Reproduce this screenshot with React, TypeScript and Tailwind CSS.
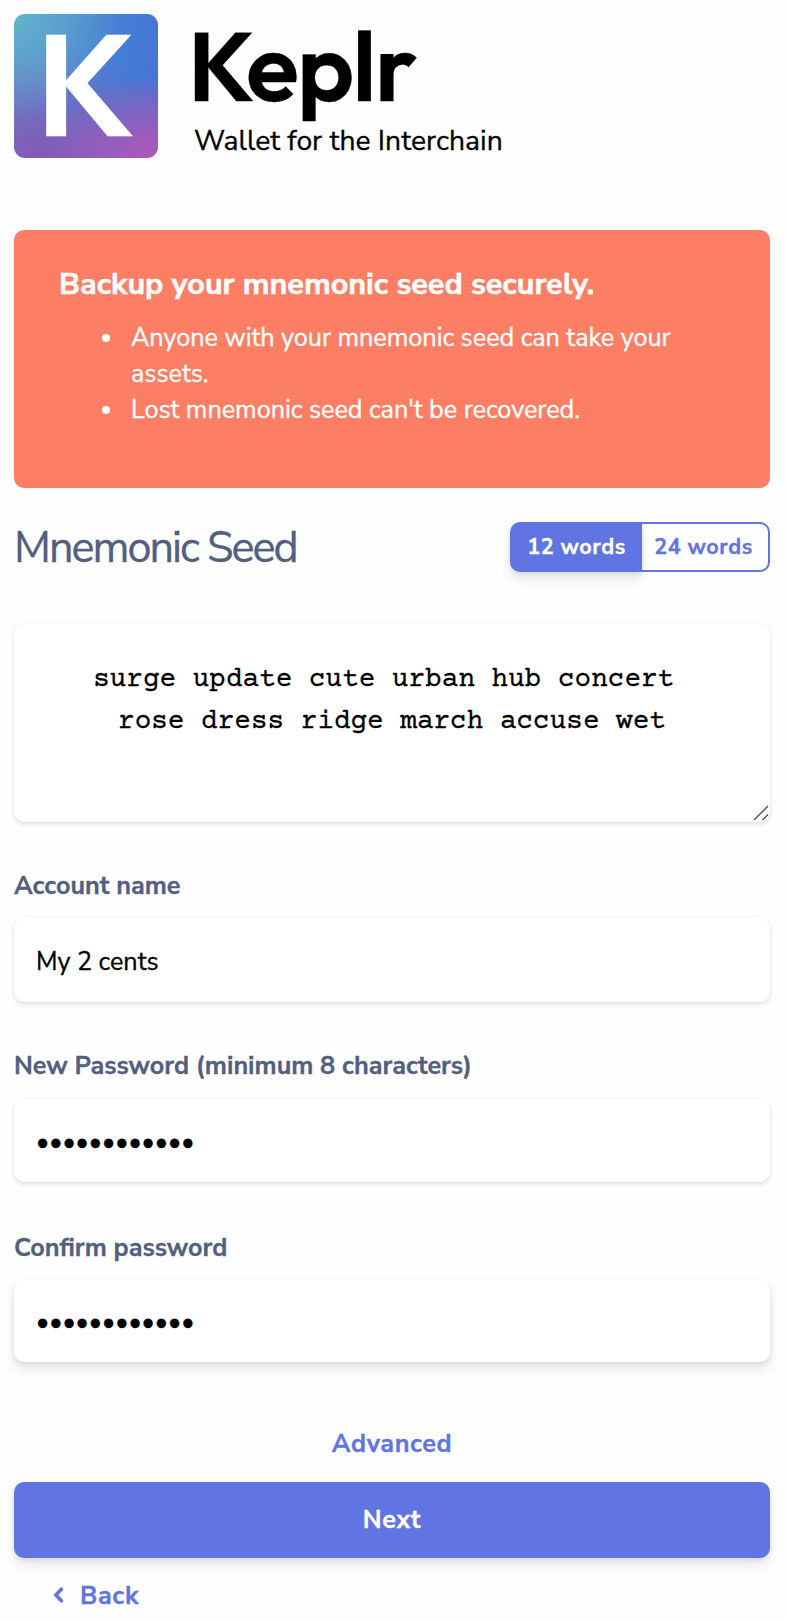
import React from "react";

const mnemonic = "surge update cute urban hub concert\u00a0\nrose dress ridge march accuse wet";

const inputBase =
  "block w-full rounded-[10px] bg-white px-[22px] text-[25.2px] text-black outline-none";
const softShadow =
  "shadow-[0_2px_5px_rgba(50,50,93,0.15),0_1px_0_rgba(0,0,0,0.02)]";
const raisedShadow =
  "shadow-[0_7px_11px_rgba(50,50,93,0.11),0_2px_5px_rgba(0,0,0,0.08)]";

function Label({ htmlFor, children }: { htmlFor: string; children: React.ReactNode }) {
  return (
    <label htmlFor={htmlFor} className="block text-[25.2px] leading-[38px] font-bold text-[#525f7f]">
      {children}
    </label>
  );
}

function Bullet({ children }: { children: React.ReactNode }) {
  return (
    <li className="flex items-start">
      <span className="mt-3.5 mr-[21px] h-2 w-2 shrink-0 rounded-full bg-white" />
      <span>{children}</span>
    </li>
  );
}

function Header() {
  return (
    <header className="flex h-36">
      <div className="h-36 w-36 rounded-[11px] bg-[radial-gradient(circle_at_0%_0%,#5fb4cb_0%,#5fb4cb00_52%),radial-gradient(ellipse_80%_62%_at_100%_105%,#bb55b8_0%,#bb55b800_100%),radial-gradient(ellipse_130%_88%_at_15%_112%,#8558b4_0%,#8558b4e0_22%,#8558b400_100%),linear-gradient(100deg,#638dd0_0%,#427bd6_75%,#4d6fd0_100%)] pl-[22px]">
        <span className="block -mt-[3px] font-['Outfit','Lato',sans-serif] text-[144px] leading-[144px] font-semibold text-white">
          K
        </span>
      </div>
      <div className="ml-[30px]">
        <h1 className="font-['Outfit','Lato',sans-serif] text-[97px] leading-[102px] font-semibold tracking-[-1.6px] text-black">
          <span className="tracking-[-8.5px]">K</span>eplr
        </h1>
        <p className="mt-[7px] pl-1.5 text-[28.3px] leading-9 text-black">Wallet for the Interchain</p>
      </div>
    </header>
  );
}

export default function App() {
  return (
    <main className="flex h-[1622px] w-[786px] flex-col bg-[#fefefe] pt-3.5 pr-4 pl-3.5 font-['Nunito_Sans','Nunito','Lato',sans-serif] [-webkit-text-stroke:0.3px]">
      <Header />

      <section className="mt-[72px] h-[258px] rounded-[10px] bg-[#fc7f65] px-[45px] pt-[31px] text-white">
        <h2 className="text-[30.5px] leading-[46px] font-bold [-webkit-text-stroke:0.5px]">Backup your mnemonic seed securely.</h2>
        <ul className="mt-[13px] pl-[43px] text-[25.2px] leading-9">
          <Bullet>Anyone with your mnemonic seed can take your assets.</Bullet>
          <Bullet>Lost mnemonic seed can't be recovered.</Bullet>
        </ul>
      </section>

      <div className="mt-[34px] flex items-start justify-between">
        <h2 className="text-[43.2px] leading-[52px] tracking-[-2px] text-[#525f7f]">Mnemonic Seed</h2>
        <div className="flex h-[50px] text-[21.6px] font-bold tracking-[0.54px]">
          <button className="w-[132px] rounded-l-[10px] bg-[#6074e2] pl-px text-white shadow-[0_7px_11px_rgba(50,50,93,0.11),0_2px_5px_rgba(0,0,0,0.08)]">
            12 words
          </button>
          <button className="w-[128px] rounded-r-[10px] border-2 border-l-0 border-[#6074e2] pr-[3px] text-[#6074e2]">
            24 words
          </button>
        </div>
      </div>

      <div className="relative mt-[50px]">
        <textarea
          readOnly
          defaultValue={mnemonic}
          className={`block h-[198px] w-full resize-none rounded-[10px] bg-white px-9 pt-[35px] text-center font-['Courier_Prime','Liberation_Mono',monospace] text-[27.7px] leading-[42px] text-black outline-none [-webkit-text-stroke:0.3px] ${softShadow}`}
        />
        <svg viewBox="0 0 16 16" className="absolute right-px bottom-px h-4 w-4" fill="none" stroke="#555" strokeWidth="1.5">
          <path d="M1 15 15 1M9.5 15 15 9.5" />
        </svg>
      </div>

      <div className="mt-[45px]">
        <Label htmlFor="account">Account name</Label>
        <input id="account" readOnly defaultValue="My 2 cents" className={`mt-[13px] h-[84px] pt-1 ${inputBase} ${softShadow}`} />
      </div>

      <div className="mt-[45px]">
        <Label htmlFor="password">New Password (minimum 8 characters)</Label>
        <input id="password" type="password" readOnly defaultValue="mysecretpass" className={`mt-[15px] h-[82px] pt-0.5 ${inputBase} ${softShadow}`} />
      </div>

      <div className="mt-[47px]">
        <Label htmlFor="confirm">Confirm password</Label>
        <input id="confirm" type="password" readOnly defaultValue="mysecretpass" className={`mt-[13px] h-[82px] pt-0.5 ${inputBase} ${raisedShadow}`} />
      </div>

      <button className="mt-[63px] text-[25.2px] leading-[38px] font-bold tracking-[0.63px] text-[#6074e2]">
        Advanced
      </button>
      <button className={`mt-[19px] h-[76px] shrink-0 rounded-[10px] bg-[#6074e2] pt-px text-[25.2px] font-bold tracking-[0.63px] text-white ${raisedShadow}`}>
        Next
      </button>
      <button className="mt-[19px] flex items-center self-start pl-[39px] text-[25.2px] leading-[38px] font-bold tracking-[0.63px] text-[#6074e2]">
        <svg viewBox="0 0 11 16" className="mr-4 mb-0.5 h-4 w-[11px]" fill="none" stroke="currentColor" strokeWidth="3.6" strokeLinecap="round">
          <path d="M8.4 2.2 2.9 8l5.5 5.8" />
        </svg>
        Back
      </button>
    </main>
  );
}
